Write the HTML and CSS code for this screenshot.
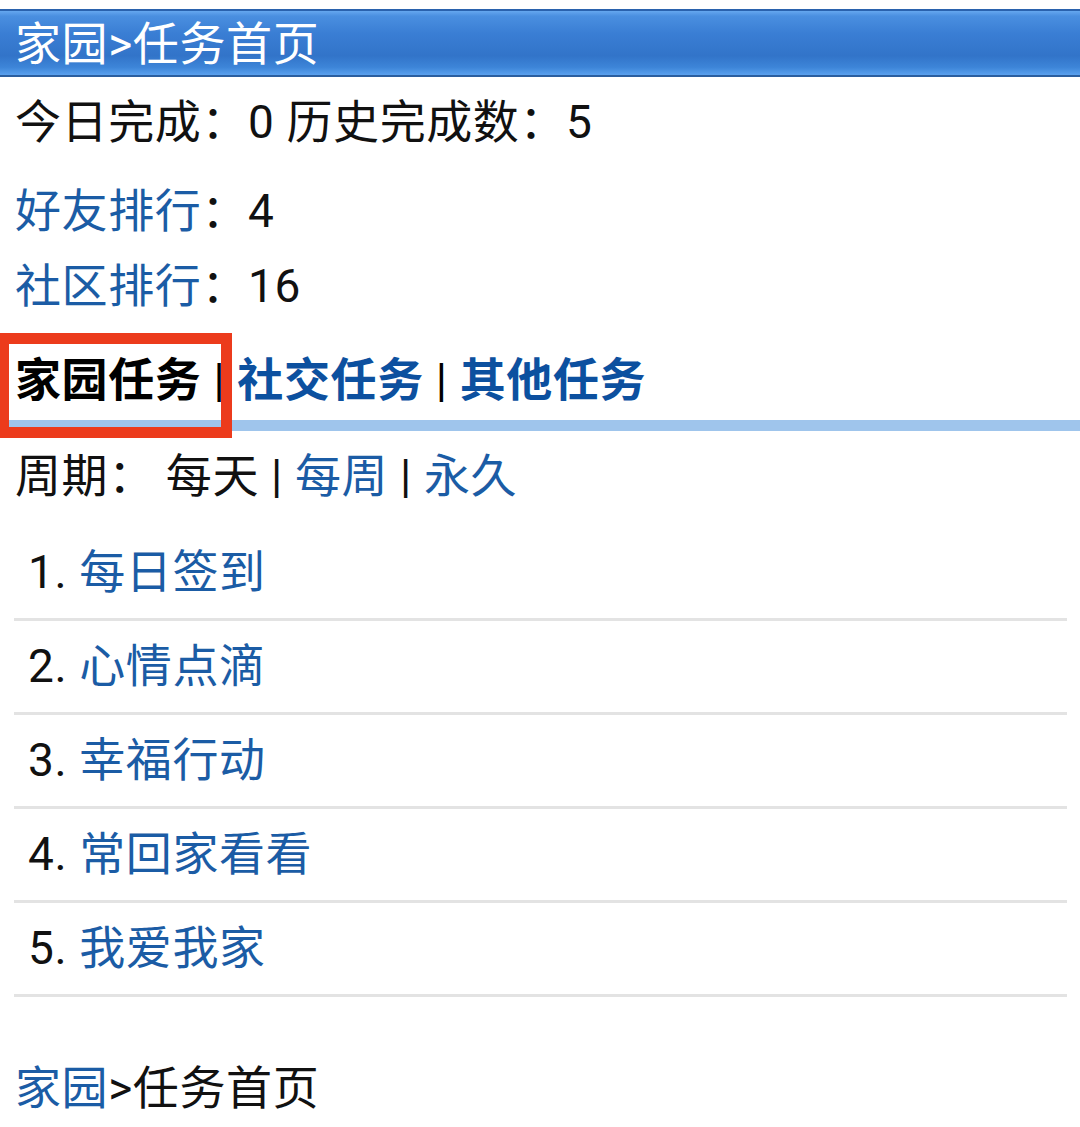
FILE: index.html
```html
<!DOCTYPE html>
<html lang="zh-CN">
<head>
<meta charset="utf-8">
<title>任务首页</title>
<link rel="stylesheet" href="styles.css">
</head>
<body>
<div class="topbar">家园&gt;任务首页</div>
<p class="stats">今日完成：0 历史完成数：5</p>
<div class="ranks">
  <div class="line"><a href="#">好友排行</a>：4</div>
  <div class="line"><a href="#">社区排行</a>：16</div>
</div>
<div class="tabs">
  <span class="tab current">家园任务</span> <span class="sep">|</span> <a class="tab" href="#">社交任务</a> <span class="sep">|</span> <a class="tab" href="#">其他任务</a>
  <div class="highlight"></div>
</div>
<div class="period">周期：<span class="gap"></span>每天 | <a href="#">每周</a> | <a href="#">永久</a></div>
<ul class="tasks">
  <li>1. <a href="#">每日签到</a></li>
  <li>2. <a href="#">心情点滴</a></li>
  <li>3. <a href="#">幸福行动</a></li>
  <li>4. <a href="#">常回家看看</a></li>
  <li>5. <a href="#">我爱我家</a></li>
</ul>
<div class="crumb"><a href="#">家园</a>&gt;任务首页</div>
</body>
</html>
```
FILE: styles.css
```css
html, body {
  margin: 0;
  padding: 0;
  background: #fff;
}
body {
  font-family: Roboto, "Noto Sans CJK SC", sans-serif;
  font-size: 46px;
  letter-spacing: 0.6px;
  color: #111;
  padding-top: 9px;
}
a {
  color: #1b5ca5;
  text-decoration: none;
}
.topbar {
  height: 68px;
  line-height: 66px;
  box-sizing: border-box;
  padding-left: 15px;
  color: #fff;
  border-top: 2px solid #2a62ad;
  border-bottom: 2px solid #2b5e9f;
  background: linear-gradient(to bottom, #65a7ef 0%, #4a8fe0 8%, #3a7ed4 35%, #3274c9 70%, #3d85d8 88%, #5aa0ee 100%);
}
.stats {
  margin: 15px 0 0;
  padding-left: 15px;
  line-height: 60px;
}
.ranks {
  margin-top: 22px;
  padding-left: 15px;
}
.ranks .line {
  line-height: 75px;
}
.tabs {
  position: relative;
  margin-top: 26px;
  padding-left: 15px;
  line-height: 60px;
  padding-bottom: 10px;
  border-bottom: 11px solid #9fc5ec;
  font-weight: 700;
}
.tabs .current {
  color: #000;
}
.tabs a.tab {
  color: #0c509f;
}
.tabs .sep {
  font-weight: 400;
  color: #000;
}
.highlight {
  position: absolute;
  left: -2px;
  top: -17px;
  width: 234px;
  height: 105px;
  box-sizing: border-box;
  border: 11px solid #ec3b1c;
}
.period {
  margin-top: 15px;
  padding-left: 15px;
  line-height: 60px;
}
.gap {
  display: inline-block;
  width: 11px;
}
.tasks {
  list-style: none;
  margin: 21px 13px 0 14px;
  padding: 0;
}
.tasks li {
  height: 94px;
  box-sizing: border-box;
  line-height: 91px;
  padding-left: 14px;
  border-bottom: 3px solid #e3e3e3;
  color: #111;
}
.crumb {
  margin-top: 61px;
  padding-left: 15px;
  line-height: 60px;
}
```
